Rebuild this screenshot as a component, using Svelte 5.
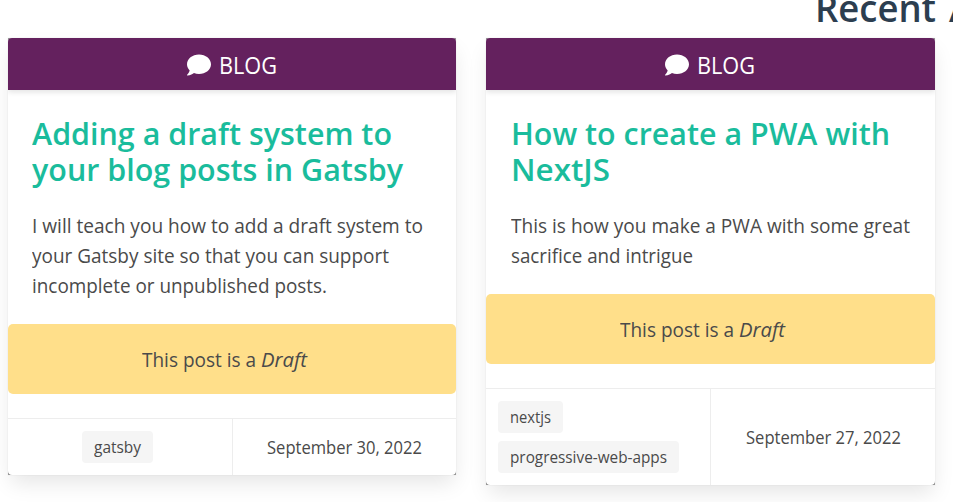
<script>
  const posts = [
    {
      title: [['Adding a draft system to', 360], ['your blog posts in Gatsby', 371]],
      text: [
        ['I will teach you how to add a draft system to', 391],
        ['your Gatsby site so that you can support', 357],
        ['incomplete or unpublished posts.', 295]
      ],
      tags: [['gatsby', 47]],
      date: 'September 30, 2022'
    },
    {
      title: [['How to create a PWA with', 379], ['NextJS', 99]],
      text: [
        ['This is how you make a PWA with some great', 399],
        ['sacrifice and intrigue', 182]
      ],
      tags: [['nextjs', 41], ['progressive-web-apps', 157]],
      date: 'September 27, 2022'
    }
  ];

  // Condenses a line of text so that it spans the given measure.
  function measure(node, width) {
    const natural = node.getBoundingClientRect().width;
    node.style.width = `${width}px`;
    node.style.transform = `scaleX(${width / natural})`;
  }
</script>

<main>
  <h1><span use:measure={121}>Recent</span><span class="next">Articles</span></h1>
  <div class="columns">
    {#each posts as post}
      <div class="frame">
        <article class="card">
          <header>
            <svg viewBox="0 0 512 512" width="24" height="24" fill="currentColor" aria-hidden="true">
              <path d="M256 32C114.600 32 0 125.100 0 240c0 49.600 21.400 95 57 130.700C44.500 421.100 2.700 466 2.200 466.500c-2.200 2.300-2.800 5.700-1.500 8.700S4.800 480 8 480c66.300 0 116-31.800 140.600-51.400 32.700 12.300 69 19.400 107.400 19.400 141.400 0 256-93.100 256-208S397.400 32 256 32z" />
            </svg>
            <span use:measure={58}>BLOG</span>
          </header>
          <div class="content">
            <h2>
              {#each post.title as [line, width]}
                <div><span use:measure={width}>{line}</span></div>
              {/each}
            </h2>
            <div class="summary">
              {#each post.text as [line, width]}
                <div><span use:measure={width}>{line}</span></div>
              {/each}
            </div>
          </div>
          <div class="draft"><span use:measure={119}>This post is a&nbsp;</span><em use:measure={46}>Draft</em></div>
          <footer>
            <div class="tags" class:many={post.tags.length > 1}>
              {#each post.tags as [tag, width]}
                <div class="tag"><span use:measure={width}>{tag}</span></div>
              {/each}
            </div>
            <time><span use:measure={155}>{post.date}</span></time>
          </footer>
        </article>
      </div>
    {/each}
  </div>
</main>

<style>
  :global(body) {
    background: #fff;
    overflow: hidden;
  }
  main {
    height: 502px;
    overflow: hidden;
    font-family: "Open Sans", "Noto Sans", sans-serif;
    font-size: 19.5px;
    color: #4a4a4a;
  }
  span, em {
    white-space: nowrap;
    display: inline-block;
    transform-origin: left;
  }
  h1 {
    margin: -16px 0 0 815px;
    height: 54px;
    line-height: 46px;
    font-size: 38px;
    font-weight: 600;
    color: #2c3e50;
    white-space: nowrap;
  }
  .next {
    margin-left: 13px;
  }
  .columns {
    display: flex;
    align-items: flex-start;
    gap: 30px;
    padding-left: 8px;
  }
  .frame {
    width: 448px;
    flex: none;
    background: #777;
    border-radius: 1px;
    box-shadow: 0 10px 20px -2.5px rgba(10, 10, 10, 0.1), 0 0 0 1px rgba(10, 10, 10, 0.02);
  }
  .frame + .frame {
    width: 449px;
  }
  .card {
    background: #fff;
    border-radius: 4px;
    overflow: hidden;
  }
  header {
    display: flex;
    align-items: center;
    justify-content: center;
    gap: 8px;
    height: 52px;
    padding-right: 1px;
    background: #64215e;
    color: #fff;
    font-size: 23.5px;
    line-height: 54px;
    box-shadow: 0 2.5px 5px rgba(10, 10, 10, 0.1);
  }
  header svg {
    margin-top: 2px;
  }
  header span {
    padding-top: 1px;
  }
  .content {
    padding: 25px 24px 23px;
  }
  h2 {
    margin: 0 0 24px;
    color: #1abc9c;
    font-size: 31.5px;
    line-height: 36px;
    font-weight: 600;
  }
  .summary {
    line-height: 30px;
  }
  h2 div { height: 36px; }
  .summary div { height: 30px; }
  .frame + .frame .content {
    padding-left: 24.5px;
  }
  .draft {
    display: flex;
    justify-content: center;
    height: 70px;
    line-height: 72px;
    padding-right: 16px;
    background: #ffdf8a;
    border-radius: 5px;
    font-size: 19.5px;
    margin-bottom: 24px;
  }
  footer {
    display: flex;
    border-top: 1px solid #ededed;
  }
  .tags {
    flex: 1;
    display: flex;
    flex-direction: column;
    align-items: center;
    gap: 8px;
    padding: 12px 17px 12px 12px;
    border-right: 1px solid #ededed;
  }
  .tags.many {
    align-items: flex-start;
  }
  .tag {
    height: 32px;
    line-height: 32px;
    padding: 0 12px;
    background: #f5f5f5;
    border-radius: 4px;
    font-size: 16px;
  }
  time {
    flex: none;
    width: 223px;
    display: flex;
    align-items: center;
    justify-content: center;
    font-size: 17.5px;
  }
  .frame + .frame time {
    width: 224px;
  }
</style>
